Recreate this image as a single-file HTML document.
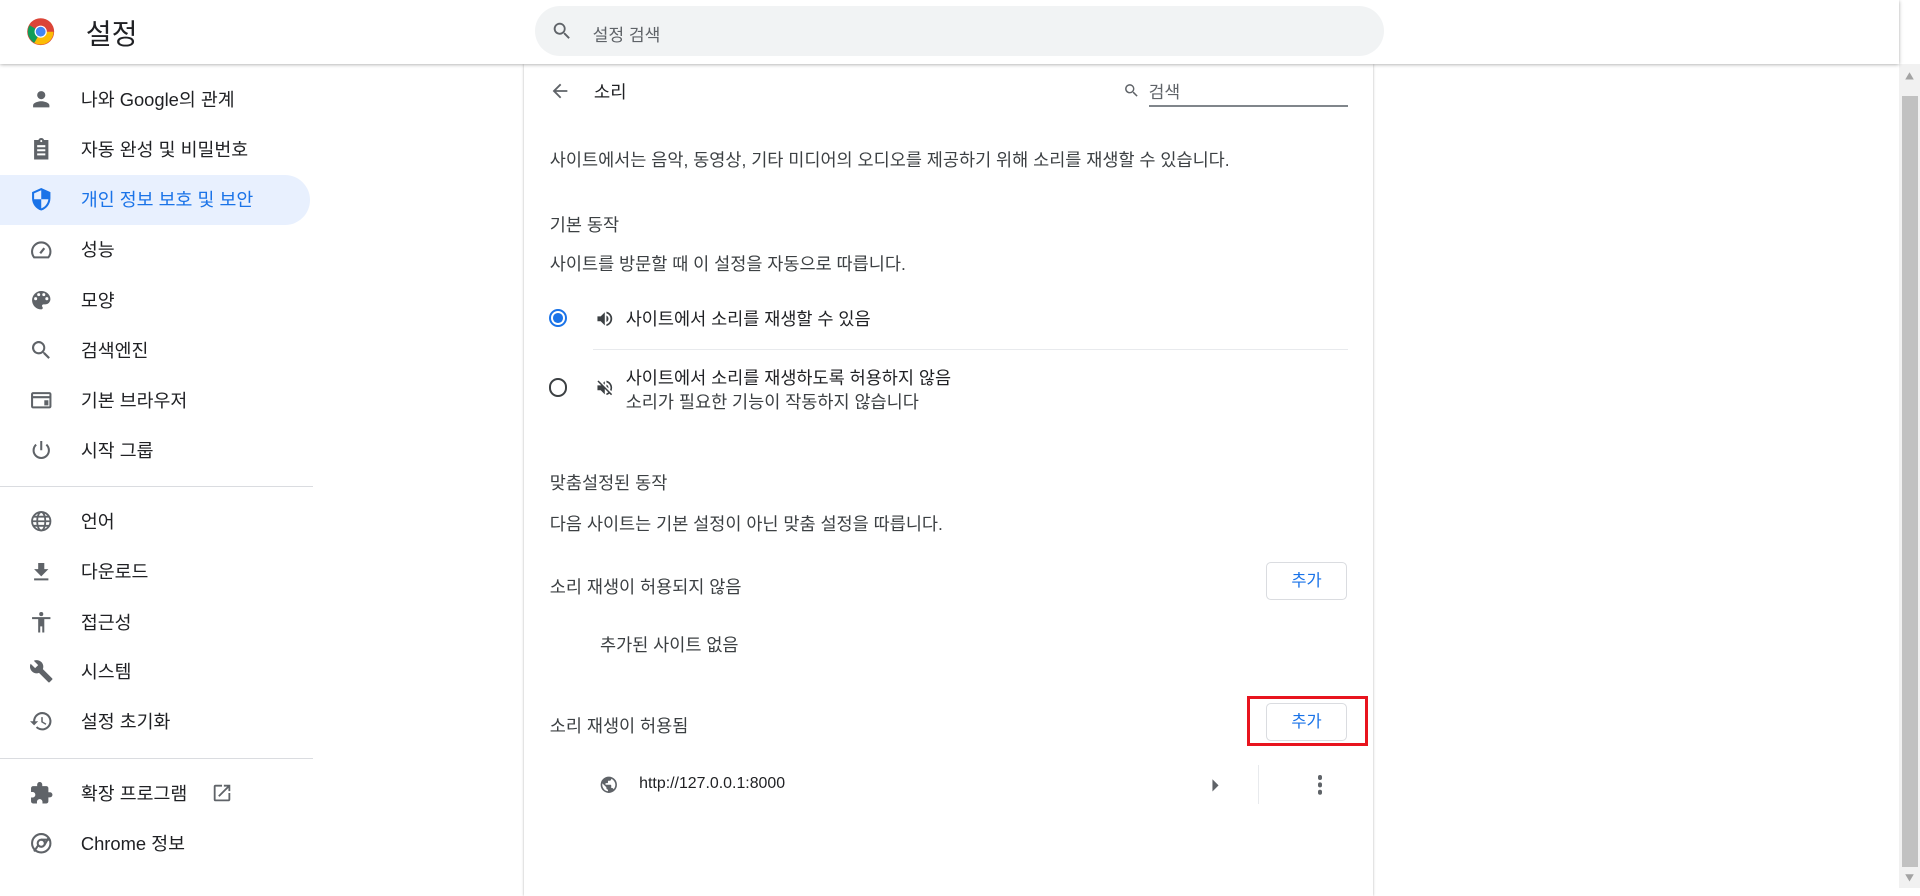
<!DOCTYPE html>
<html><head><meta charset="utf-8"><style>
html{zoom:1.22449}
body{margin:0;width:1568px;height:725px;overflow:hidden;background:#fff;font-family:"Liberation Sans","Noto Sans CJK KR",sans-serif;color:#202124;position:relative}
.a{position:absolute;white-space:nowrap}
.hdr{position:absolute;left:0;top:0;width:1551px;height:52px;background:#fff;box-shadow:0 1px 3px rgba(0,0,0,.35);z-index:2}
.side{font-size:15px;color:#202124}
.side .a{margin-top:-2px}
.t13{font-size:14.3px;color:#3c4043;margin-top:-1px}
.btn{position:absolute;width:66px;height:31px;border:1px solid #dadce0;border-radius:4px;background:#fff;color:#1a73e8;font-size:13.5px;text-align:center;line-height:30px;box-sizing:border-box}
svg{position:absolute}
</style></head><body>
<div class="hdr">
<svg style="left:21px;top:14px" width="24" height="24" viewBox="0 0 24 24"><circle cx="12" cy="12" r="11" fill="#db4437"/><path d="M12 12 L22.5 12 A10.5 10.5 0 0 1 6.75 21.1Z" fill="#fbbc05"/><path d="M12 12 L6.75 21.1 A10.5 10.5 0 0 1 2.9 6.75Z" fill="#0f9d58"/><circle cx="12" cy="12" r="5" fill="#fff"/><circle cx="12" cy="12" r="4" fill="#4285f4"/></svg>
<div class="a" style="left:70px;top:10px;font-size:23px">설정</div>
<div class="a" style="left:437px;top:5px;width:693px;height:41px;border-radius:21px;background:#f1f3f4"></div>
<svg style="left:450px;top:16px" width="18" height="18" viewBox="0 0 24 24"><path fill="#5f6368" d="M15.5 14h-.8l-.3-.3A6.5 6.5 0 1 0 9.5 16a6.5 6.5 0 0 0 4.2-1.6l.3.3v.8l5 5 1.5-1.5-5-5zm-6 0a4.5 4.5 0 1 1 0-9 4.5 4.5 0 0 1 0 9z"/></svg>
<div class="a" style="left:484px;top:17px;font-size:14px;color:#5f6368">설정 검색</div>
</div>
<div class="a" style="left:0;top:143px;width:253px;height:41px;background:#e8f0fe;border-radius:0 21px 21px 0"></div>
<div class="side">
<svg style="left:24px;top:71px" width="20" height="20" viewBox="0 0 24 24"><path fill="#5f6368" d="M12 12a4 4 0 1 0 0-8 4 4 0 0 0 0 8zm0 2c-2.7 0-8 1.3-8 4v2h16v-2c0-2.7-5.3-4-8-4z"/></svg>
<div class="a" style="left:66px;top:72px">나와 Google의 관계</div>
<svg style="left:24px;top:112px" width="20" height="20" viewBox="0 0 24 24"><path fill="#5f6368" d="M19 3h-4.2C14.4 1.8 13.3 1 12 1s-2.4.8-2.8 2H5v19h14V3zm-7 0a1 1 0 1 1 0 2 1 1 0 0 1 0-2zm4 15H8v-2h8v2zm0-4H8v-2h8v2zm0-4H8V8h8v2z"/></svg>
<div class="a" style="left:66px;top:113px">자동 완성 및 비밀번호</div>
<svg style="left:24px;top:153px" width="20" height="20" viewBox="0 0 24 24"><path fill="#1a73e8" d="M12 1 3 5v6c0 5.5 3.8 10.7 9 12 5.2-1.3 9-6.5 9-12V5l-9-4zm0 11h7c-.5 4.1-3.3 7.8-7 8.9V12H5V6.3l7-3.1V12z"/></svg>
<div class="a" style="left:66px;top:154px;color:#1a73e8">개인 정보 보호 및 보안</div>
<svg style="left:24px;top:194px" width="20" height="20" viewBox="0 0 24 24"><path fill="none" stroke="#5f6368" stroke-width="2" d="M5 19a9 9 0 1 1 14 0z"/><path stroke="#5f6368" stroke-width="2.2" d="M11 15 15 10"/></svg>
<div class="a" style="left:66px;top:195px">성능</div>
<svg style="left:24px;top:235px" width="20" height="20" viewBox="0 0 24 24"><path fill="#5f6368" d="M12 3a9 9 0 0 0 0 18c.8 0 1.5-.7 1.5-1.5 0-.4-.1-.7-.4-1-.2-.3-.4-.6-.4-1 0-.8.7-1.5 1.5-1.5H16a5 5 0 0 0 5-5c0-4.4-4-8-9-8zM6.5 12a1.5 1.5 0 1 1 0-3 1.5 1.5 0 0 1 0 3zm3-4a1.5 1.5 0 1 1 0-3 1.5 1.5 0 0 1 0 3zm5 0a1.5 1.5 0 1 1 0-3 1.5 1.5 0 0 1 0 3zm3 4a1.5 1.5 0 1 1 0-3 1.5 1.5 0 0 1 0 3z"/></svg>
<div class="a" style="left:66px;top:236px">모양</div>
<svg style="left:24px;top:276px" width="20" height="20" viewBox="0 0 24 24"><path fill="#5f6368" d="M15.5 14h-.8l-.3-.3A6.5 6.5 0 1 0 9.5 16a6.5 6.5 0 0 0 4.2-1.6l.3.3v.8l5 5 1.5-1.5-5-5zm-6 0a4.5 4.5 0 1 1 0-9 4.5 4.5 0 0 1 0 9z"/></svg>
<div class="a" style="left:66px;top:277px">검색엔진</div>
<svg style="left:24px;top:317px" width="20" height="20" viewBox="0 0 24 24"><path fill="#5f6368" d="M20 4H4c-1.1 0-2 .9-2 2v12c0 1.1.9 2 2 2h16c1.1 0 2-.9 2-2V6c0-1.1-.9-2-2-2zm0 14H4v-8h16v8zm0-10H4V6h16v2zm-5 4h4v5h-4z"/></svg>
<div class="a" style="left:66px;top:318px">기본 브라우저</div>
<svg style="left:24px;top:358px" width="20" height="20" viewBox="0 0 24 24"><path fill="none" stroke="#5f6368" stroke-width="2" d="M12 3v9M7 6.5a7.5 7.5 0 1 0 10 0"/></svg>
<div class="a" style="left:66px;top:359px">시작 그룹</div>
<div class="a" style="left:0;top:397px;width:256px;height:1px;background:#dadce0;margin:0"></div>
<svg style="left:24px;top:416px" width="20" height="20" viewBox="0 0 24 24"><g fill="none" stroke="#5f6368" stroke-width="1.8"><circle cx="12" cy="12" r="9"/><ellipse cx="12" cy="12" rx="4" ry="9"/><path d="M3 12h18M4.5 7.5h15M4.5 16.5h15"/></g></svg>
<div class="a" style="left:66px;top:417px">언어</div>
<svg style="left:24px;top:457px" width="20" height="20" viewBox="0 0 24 24"><path fill="#5f6368" d="M19 9h-4V3H9v6H5l7 7 7-7zM5 18v2h14v-2H5z"/></svg>
<div class="a" style="left:66px;top:458px">다운로드</div>
<svg style="left:24px;top:498px" width="20" height="20" viewBox="0 0 24 24"><path fill="#5f6368" d="M12 2a2 2 0 1 1 0 4 2 2 0 0 1 0-4zm9 7h-6v13h-2v-6h-2v6H9V9H3V7h18v2z"/></svg>
<div class="a" style="left:66px;top:499px">접근성</div>
<svg style="left:24px;top:538px" width="20" height="20" viewBox="0 0 24 24"><path fill="#5f6368" d="M22.7 19l-9.1-9.1c.9-2.3.4-5-1.5-6.9-2-2-5-2.4-7.4-1.3L9 6 6 9 1.6 4.7C.4 7.1.9 10.1 2.9 12.1c1.9 1.9 4.6 2.4 6.9 1.5l9.1 9.1c.4.4 1 .4 1.4 0l2.3-2.3c.5-.4.5-1.1.1-1.4z"/></svg>
<div class="a" style="left:66px;top:539px">시스템</div>
<svg style="left:24px;top:579px" width="20" height="20" viewBox="0 0 24 24"><path fill="#5f6368" d="M13 3a9 9 0 0 0-9 9H1l3.9 3.9.1.1L9 12H6a7 7 0 1 1 2.1 5L6.7 18.4A9 9 0 1 0 13 3zm-1 5v5l4.3 2.5.7-1.2-3.5-2.1V8H12z"/></svg>
<div class="a" style="left:66px;top:580px">설정 초기화</div>
<div class="a" style="left:0;top:619px;width:256px;height:1px;background:#dadce0;margin:0"></div>
<svg style="left:24px;top:638px" width="20" height="20" viewBox="0 0 24 24"><path fill="#5f6368" d="M20.5 11H19V7c0-1.1-.9-2-2-2h-4V3.5a2.5 2.5 0 0 0-5 0V5H4c-1.1 0-2 .9-2 2v3.8h1.5c1.5 0 2.7 1.2 2.7 2.7S5 16.2 3.5 16.2H2V20c0 1.1.9 2 2 2h3.8v-1.5c0-1.5 1.2-2.7 2.7-2.7s2.7 1.2 2.7 2.7V22H17c1.1 0 2-.9 2-2v-4h1.5a2.5 2.5 0 0 0 0-5z"/></svg>
<div class="a" style="left:66px;top:639px">확장 프로그램</div>
<svg style="left:172px;top:639px" width="18" height="18" viewBox="0 0 24 24"><path fill="#5f6368" d="M19 19H5V5h7V3H5a2 2 0 0 0-2 2v14a2 2 0 0 0 2 2h14c1.1 0 2-.9 2-2v-7h-2v7zM14 3v2h3.6l-9.8 9.8 1.4 1.4L19 6.4V10h2V3h-7z"/></svg>
<svg style="left:24px;top:679px" width="20" height="20" viewBox="0 0 24 24"><circle cx="12" cy="12" r="9" fill="none" stroke="#5f6368" stroke-width="2"/><circle cx="12" cy="12" r="3.5" fill="none" stroke="#5f6368" stroke-width="2"/><path stroke="#5f6368" stroke-width="2" d="M12 8.5h8.5M9 14l-4 6M15 14l4-7"/></svg>
<div class="a" style="left:66px;top:680px">Chrome 정보</div>
</div>
<!-- card -->
<div class="a" style="left:428px;top:52px;width:693px;height:680px;background:#fff;box-shadow:0 0 2px rgba(0,0,0,.3)"></div>
<svg style="left:448px;top:65px" width="18" height="18" viewBox="0 0 24 24"><path fill="#5f6368" d="M20 11H7.8l5.6-5.6L12 4l-8 8 8 8 1.4-1.4L7.8 13H20v-2z"/></svg>
<div class="a" style="left:485px;top:64px;font-size:14.5px;color:#202124">소리</div>
<svg style="left:917px;top:67px" width="14" height="14" viewBox="0 0 24 24"><path fill="#5f6368" d="M15.5 14h-.8l-.3-.3A6.5 6.5 0 1 0 9.5 16a6.5 6.5 0 0 0 4.2-1.6l.3.3v.8l5 5 1.5-1.5-5-5zm-6 0a4.5 4.5 0 1 1 0-9 4.5 4.5 0 0 1 0 9z"/></svg>
<div class="a" style="left:938px;top:64px;font-size:14px;color:#5f6368">검색</div>
<div class="a" style="left:938px;top:86px;width:163px;height:1px;background:#80868b"></div>
<div class="a t13" style="left:449px;top:121px">사이트에서는 음악, 동영상, 기타 미디어의 오디오를 제공하기 위해 소리를 재생할 수 있습니다.</div>
<div class="a t13" style="left:449px;top:174px">기본 동작</div>
<div class="a t13" style="left:449px;top:206px">사이트를 방문할 때 이 설정을 자동으로 따릅니다.</div>
<div class="a" style="left:448px;top:252px;width:12px;height:12px;border:2px solid #1a73e8;border-radius:50%"></div>
<div class="a" style="left:452px;top:256px;width:8px;height:8px;background:#1a73e8;border-radius:50%"></div>
<svg style="left:486px;top:252px" width="16" height="16" viewBox="0 0 24 24"><path fill="#3c4043" d="M3 9v6h4l5 5V4L7 9H3zm13.5 3A4.5 4.5 0 0 0 14 8v8a4.5 4.5 0 0 0 2.5-4zM14 3.2v2.1a7 7 0 0 1 0 13.4v2.1a9 9 0 0 0 0-17.6z"/></svg>
<div class="a" style="left:511px;top:250px;font-size:14.3px;color:#202124">사이트에서 소리를 재생할 수 있음</div>
<div class="a" style="left:484px;top:285px;width:617px;height:1px;background:#e8eaed"></div>
<div class="a" style="left:448px;top:309px;width:12px;height:12px;border:2px solid #3c4043;border-radius:50%"></div>
<svg style="left:486px;top:309px" width="16" height="16" viewBox="0 0 24 24"><path fill="#3c4043" d="M16.5 12A4.5 4.5 0 0 0 14 8v2.2l2.5 2.5V12zm2.5 0c0 .9-.2 1.8-.5 2.6l1.5 1.5A9 9 0 0 0 14 3.2v2.1c2.9.9 5 3.5 5 6.7zM4.3 3 3 4.3 7.7 9H3v6h4l5 5v-6.7l4.3 4.3c-.7.5-1.4.9-2.3 1.2v2.1c1.4-.3 2.6-1 3.7-1.8l2 2 1.3-1.3-9-9L4.3 3zM12 4 9.9 6.1 12 8.2V4z"/></svg>
<div class="a" style="left:511px;top:298px;font-size:14.3px;color:#202124">사이트에서 소리를 재생하도록 허용하지 않음</div>
<div class="a t13" style="left:511px;top:319px">소리가 필요한 기능이 작동하지 않습니다</div>
<div class="a t13" style="left:449px;top:385px">맞춤설정된 동작</div>
<div class="a t13" style="left:449px;top:418px">다음 사이트는 기본 설정이 아닌 맞춤 설정을 따릅니다.</div>
<div class="a t13" style="left:449px;top:470px">소리 재생이 허용되지 않음</div>
<div class="btn" style="left:1034px;top:459px">추가</div>
<div class="a t13" style="left:490px;top:517px">추가된 사이트 없음</div>
<div class="a t13" style="left:449px;top:583px">소리 재생이 허용됨</div>
<div class="btn" style="left:1034px;top:574px">추가</div>
<div class="a" style="left:1018px;top:568px;width:94px;height:36px;border:3px solid #e8141e"></div>
<svg style="left:489px;top:633px" width="16" height="16" viewBox="0 0 24 24"><path fill="#5f6368" d="M12 2a10 10 0 1 0 0 20 10 10 0 0 0 0-20zm-1 17.9A8 8 0 0 1 4 12c0-.6.1-1.2.2-1.8L9 15v1c0 1.1.9 2 2 2v1.9zm6.9-2.5c-.3-.8-1-1.4-1.9-1.4h-1v-3c0-.6-.4-1-1-1H8v-2h2c.6 0 1-.4 1-1V7h2c1.1 0 2-.9 2-2v-.4a8 8 0 0 1 2.9 12.8z"/></svg>
<div class="a" style="left:522px;top:633px;font-size:13px;color:#202124">http://127.0.0.1:8000</div>
<svg style="left:988px;top:635px" width="10" height="12" viewBox="0 0 10 12"><path fill="#5f6368" d="M2 1l5 5-5 5z"/></svg>
<div class="a" style="left:1027px;top:625px;width:1px;height:32px;background:#e8eaed"></div>
<div class="a" style="left:1076px;top:633px;width:4px;height:4px;border-radius:50%;background:#5f6368;box-shadow:0 6px 0 #5f6368,0 12px 0 #5f6368"></div>
<!-- scrollbar -->
<div class="a" style="left:1551px;top:52px;width:17px;height:673px;background:#f1f1f1"></div>
<div class="a" style="left:1553px;top:78px;width:13px;height:630px;background:#c1c1c1"></div>
<svg style="left:1555px;top:58px" width="9" height="8" viewBox="0 0 9 8"><path fill="#a3a3a3" d="M4.5 1 8 7H1z"/></svg>
<svg style="left:1555px;top:713px" width="9" height="8" viewBox="0 0 9 8"><path fill="#a3a3a3" d="M4.5 7 8 1H1z"/></svg>
</body></html>
